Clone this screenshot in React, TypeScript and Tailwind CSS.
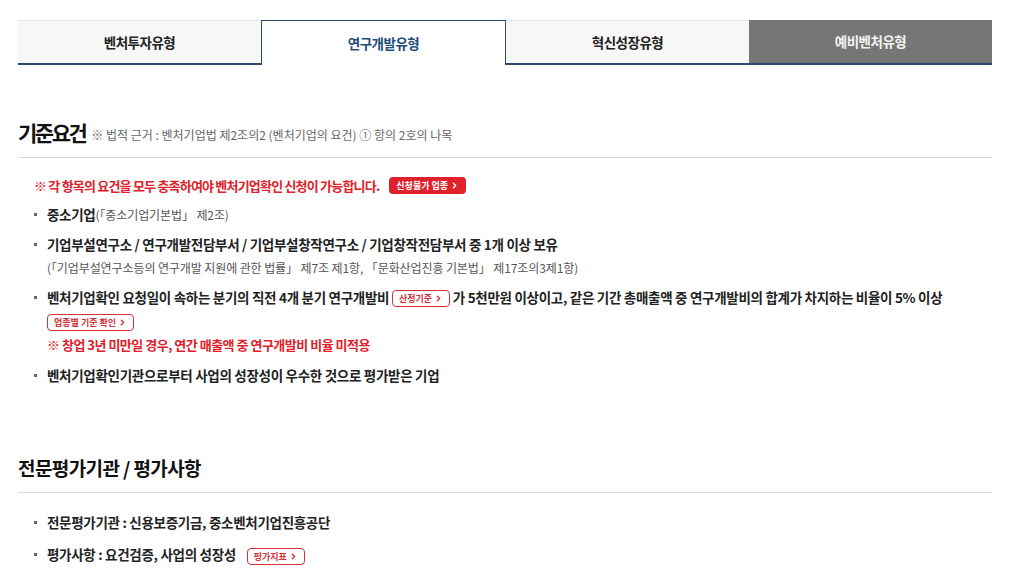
import { ChevronRight } from 'lucide-react';

const tabs = ['벤처투자유형', '연구개발유형', '혁신성장유형', '예비벤처유형'];

function OutlineBadge({ label }: { label: string }) {
  return (
    <span className="inline-flex items-center gap-[2px] h-[17px] px-[6px] rounded-[4px] border-[1.5px] border-[#d6323a] text-[#d6323a] text-[9px] leading-none font-bold tracking-normal align-middle">
      {label}
      <ChevronRight size={9} strokeWidth={4} />
    </span>
  );
}

function Bullet({ children, className = '' }: { children: React.ReactNode; className?: string }) {
  return (
    <li className={`flex ${className}`}>
      <span className="w-[13px] shrink-0 flex items-start pt-[9px]">
        <span className="w-[3px] h-[3px] bg-[#666]" />
      </span>
      <div className="flex-1">{children}</div>
    </li>
  );
}

export default function App() {
  const activeTab = 1;

  return (
    <div
      className="w-[1024px] h-[583px] overflow-hidden bg-white text-[#222]"
      style={{ fontFamily: '"Noto Sans CJK KR", "Noto Sans", sans-serif' }}
    >
      <div className="ml-[18px] mr-[32px] pt-[20px]">
        {/* type tabs */}
        <div className="flex h-[45px]">
          {tabs.map((t, i) => (
            <div
              key={t}
              className={
                i === activeTab
                  ? 'flex-1 flex items-center justify-center bg-white border-[1.5px] border-b-0 border-[#2b4b6e] text-[#1f4e7a] text-[13.5px] font-bold tracking-[-0.5px]'
                  : i === 3
                  ? 'flex-1 flex items-center justify-center bg-[#767676] border-b-[2px] border-[#2b4b6e] text-[#f2f2f2] text-[13.5px] font-bold tracking-[-0.5px]'
                  : 'flex-1 flex items-center justify-center bg-[#f7f7f7] border-t border-[#e2e2e2] border-b-[2px] border-b-[#2b4b6e] text-[#222] text-[13.5px] font-bold tracking-[-0.5px]'
              }
            >
              {t}
            </div>
          ))}
        </div>

        {/* 기준요건 */}
        <div className="mt-[54px] flex items-end gap-[6px] pb-[12px] border-b border-[#d9d9d9]">
          <h2 className="text-[21px] leading-[26px] font-bold tracking-[-2.5px] text-[#111]">기준요건</h2>
          <span className="text-[12px] leading-[20px] text-[#666] tracking-[0px]">
            ※ 법적 근거 : 벤처기업법 제2조의2 (벤처기업의 요건) ① 항의 2호의 나목
          </span>
        </div>

        <div className="pl-[16px] pt-[18px] text-[13.5px] tracking-[-0.3px]">
          <div className="flex items-center gap-[10px] text-[#e0202a] font-bold text-[13px] tracking-[-0.8px]">
            <span>※ 각 항목의 요건을 모두 충족하여야 벤처기업확인 신청이 가능합니다.</span>
            <span className="inline-flex items-center gap-[2px] h-[17px] px-[7px] rounded-[4px] bg-[#e0202a] text-white text-[9px] leading-none font-bold tracking-normal">
              신청불가 업종
              <ChevronRight size={9} strokeWidth={4} />
            </span>
          </div>

          <ul className="mt-[8px] flex flex-col gap-[9px] leading-[20px]">
            <Bullet>
              <span className="font-bold">중소기업</span>
              <span className="text-[#555] text-[12px] tracking-[-0.1px]">(「중소기업기본법」 제2조)</span>
            </Bullet>
            <Bullet>
              <div className="font-bold">
                기업부설연구소 / 연구개발전담부서 / 기업부설창작연구소 / 기업창작전담부서 중 1개 이상 보유
              </div>
              <div className="text-[#555] text-[12px] tracking-[-0.1px] mt-[4px]">
                (「기업부설연구소등의 연구개발 지원에 관한 법률」 제7조 제1항, 「문화산업진흥 기본법」 제17조의3제1항)
              </div>
            </Bullet>
            <Bullet>
              <div className="font-bold">
                벤처기업확인 요청일이 속하는 분기의 직전 4개 분기 연구개발비 <OutlineBadge label="산정기준" /> 가 5천만원 이상이고, 같은 기간 총매출액 중 연구개발비의 합계가 차지하는 비율이 5% 이상
              </div>
              <div className="mt-[3px]">
                <OutlineBadge label="업종별 기준 확인" />
              </div>
              <div className="mt-[4px] text-[#e0202a] font-bold text-[13px] tracking-[-0.5px]">※ 창업 3년 미만일 경우, 연간 매출액 중 연구개발비 비율 미적용</div>
            </Bullet>
            <Bullet className="mt-[1px]">
              <span className="font-bold">벤처기업확인기관으로부터 사업의 성장성이 우수한 것으로 평가받은 기업</span>
            </Bullet>
          </ul>
        </div>

        {/* 전문평가기관 */}
        <div className="mt-[70px] pb-[11px] border-b border-[#d9d9d9]">
          <h2 className="text-[19px] leading-[26px] font-bold tracking-[-0.6px] text-[#111]">전문평가기관 / 평가사항</h2>
        </div>

        <ul className="pl-[16px] pt-[19px] flex flex-col gap-[12px] text-[13.5px] leading-[20px] tracking-[-0.3px] font-bold">
          <Bullet>전문평가기관 : 신용보증기금, 중소벤처기업진흥공단</Bullet>
          <Bullet>
            평가사항 : 요건검증, 사업의 성장성 <span className="ml-[8px]"><OutlineBadge label="평가지표" /></span>
          </Bullet>
        </ul>
      </div>
    </div>
  );
}
